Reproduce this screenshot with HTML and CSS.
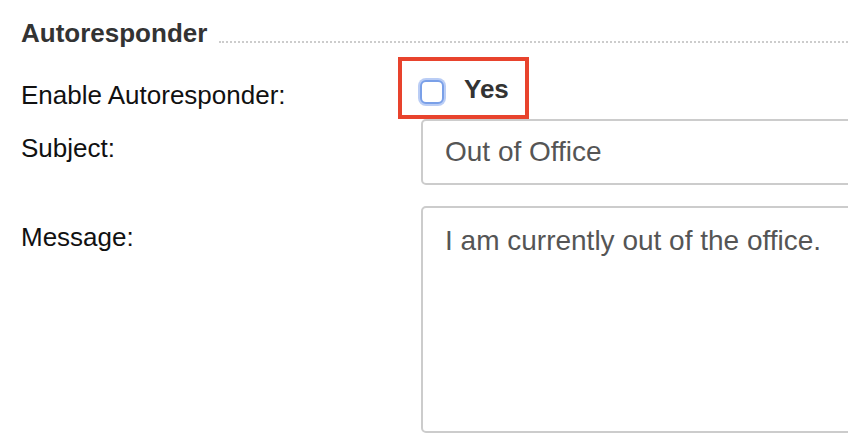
FILE: index.html
```html
<!DOCTYPE html>
<html lang="en">
<head>
<meta charset="utf-8">
<title>Autoresponder</title>
<link rel="stylesheet" href="styles.css">
</head>
<body>
<div class="section">
  <div class="heading">
    <h2 class="heading-title">Autoresponder</h2>
    <span class="heading-rule"></span>
  </div>
  <div class="row row-enable">
    <label class="label label-enable">Enable Autoresponder:</label>
    <div class="field">
      <div class="highlight">
        <span class="checkbox"></span>
        <span class="yes">Yes</span>
      </div>
    </div>
  </div>
  <div class="row row-subject">
    <label class="label label-subject">Subject:</label>
    <div class="field field-clip">
      <div class="input">Out of Office</div>
    </div>
  </div>
  <div class="row row-message">
    <label class="label label-message">Message:</label>
    <div class="field field-clip">
      <div class="textarea">I am currently out of the office.</div>
    </div>
  </div>
</div>
</body>
</html>
```

FILE: styles.css
```css
html, body {
  margin: 0;
  padding: 0;
  background: #ffffff;
}
body {
  font-family: "Liberation Sans", Arial, sans-serif;
  font-size: 26px;
  line-height: 30px;
  color: #111111;
  overflow: hidden;
  width: 848px;
  height: 448px;
}
.section {
  padding: 18px 0 0 21px;
}
.heading {
  display: flex;
  align-items: flex-start;
  height: 30px;
}
.heading-title {
  margin: 0;
  font-size: 26px;
  line-height: 30px;
  font-weight: bold;
  color: #333333;
  white-space: nowrap;
}
.heading-rule {
  flex: 1;
  margin-left: 12px;
  margin-top: 23px;
  border-bottom: 2px dotted #cccccc;
}
.row {
  display: grid;
  grid-template-columns: 400px 1fr;
}
.row-enable {
  margin-top: 9px;
}
.row-subject {
  margin-top: 0;
}
.row-message {
  margin-top: 21px;
}
.label {
  display: block;
  white-space: nowrap;
  color: #111111;
}
.label-enable { padding-top: 23px; }
.label-subject { padding-top: 14px; }
.label-message { padding-top: 16px; }
.field {
  min-width: 0;
}
.field-clip {
  overflow: hidden;
}
.highlight {
  display: inline-flex;
  align-items: flex-start;
  box-sizing: border-box;
  height: 62px;
  margin-left: -23px;
  padding: 0 16px 0 18px;
  border: 4px solid #e8432d;
  position: relative;
  z-index: 1;
}
.checkbox {
  display: block;
  box-sizing: border-box;
  width: 24px;
  height: 24px;
  margin-top: 19px;
  border: 2px solid #7aa0e8;
  border-radius: 6px;
  background: #ffffff;
  box-shadow: 0 0 0 2px rgba(140, 172, 238, 0.6);
}
.yes {
  display: block;
  margin-top: 13px;
  margin-left: 20px;
  font-weight: bold;
  color: #333333;
}
.input,
.textarea {
  box-sizing: border-box;
  width: calc(100% + 20px);
  border: 2px solid #cccccc;
  border-radius: 5px;
  color: #555555;
  font-size: 28px;
  line-height: 30px;
  padding-left: 22px;
  white-space: nowrap;
}
.input {
  height: 66px;
  padding-top: 16px;
}
.textarea {
  height: 227px;
  padding-top: 18px;
}
```
